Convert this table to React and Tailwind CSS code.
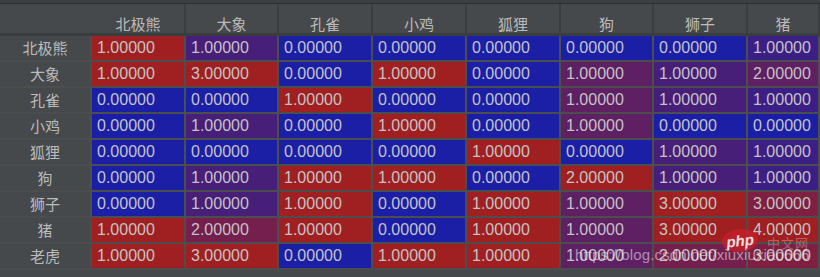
const cols = ["北极熊", "大象", "孔雀", "小鸡", "狐狸", "狗", "狮子", "猪"];
const rows = [
  ["北极熊", [1, 1, 0, 0, 0, 0, 0, 1]],
  ["大象", [1, 3, 0, 1, 0, 1, 1, 2]],
  ["孔雀", [0, 0, 1, 0, 0, 1, 1, 1]],
  ["小鸡", [0, 1, 0, 1, 0, 1, 0, 0]],
  ["狐狸", [0, 0, 0, 0, 1, 0, 1, 1]],
  ["狗", [0, 1, 1, 1, 0, 2, 1, 1]],
  ["狮子", [0, 1, 1, 0, 1, 1, 3, 3]],
  ["猪", [1, 2, 1, 0, 1, 1, 3, 4]],
  ["老虎", [1, 3, 0, 1, 1, 1, 2, 3]],
];

const colMax = cols.map((_, i) => Math.max(...rows.map(r => r[1][i])));

// blue (min) -> red (max), per column
const heat = (v, max) => {
  const t = max ? v / max : 0;
  const r = Math.round(27 + (160 - 27) * t);
  const b = Math.round(166 + (32 - 166) * t);
  return `rgb(${r},31,${b})`;
};

const grid = "grid grid-cols-[90px_92px_91px_92px_92px_92px_91px_92px_1fr] gap-x-[2px] pr-[2px]";
const cjk = "font-['Noto_Sans_CJK_SC',sans-serif]";

export default function App() {
  return (
    <div className="relative w-[820px] h-[277px] overflow-hidden bg-[#46494b] font-['Liberation_Sans',sans-serif]">
      <div className="h-[3px] bg-[#3c3f41]" />
      <div className="h-px bg-[#2e3032]" />

      {/* header */}
      <div className={`${grid} h-[29px] bg-[#3a3d3f]`}>
        <div className="bg-[#46494b] -mr-[2px]" />
        {cols.map(c => (
          <div key={c} className={`flex items-end justify-center pb-px bg-[#46494b] text-[15px] leading-[17px] text-[#bbbbbb] ${cjk}`}>
            {c}
          </div>
        ))}
      </div>
      <div className="h-[3px] bg-[#3a3d3f]" />

      {/* body */}
      <div className={`${grid} gap-y-[2px] bg-[#4b4d4f] pb-[2px]`}>
        {rows.map(([name, vals]) => (
          <div key={name} className="contents">
            <div className={`h-[24px] flex items-center justify-center bg-[#46494b] text-[15px] text-[#bbbbbb] ${cjk}`}>
              {name}
            </div>
            {vals.map((v, i) => (
              <div
                key={i}
                className="h-[24px] flex items-center pl-[5px] text-[16px] text-[#c4c4c6] whitespace-nowrap overflow-hidden"
                style={{ backgroundColor: heat(v, colMax[i]) }}
              >
                {v.toFixed(5)}
              </div>
            ))}
          </div>
        ))}
      </div>

      {/* watermark */}
      <div className="absolute left-[722px] top-[229px] w-[36px] h-[23px] rounded-[50%] bg-[#c8202a]/75 -rotate-6 flex items-center justify-center">
        <span className="text-[15px] italic font-bold text-white/85 leading-none">php</span>
      </div>
      <div className={`absolute left-[767px] top-[236px] text-[13px] leading-[14px] tracking-[1px] text-white/30 ${cjk}`}>
        中文网
      </div>
      <div className="absolute left-[575px] top-[246px] text-[15px] leading-[18px] tracking-[0.15px] text-white/50 whitespace-nowrap">
        https://blog.csdn.net/xiuxiuxiao666
      </div>
    </div>
  );
}
